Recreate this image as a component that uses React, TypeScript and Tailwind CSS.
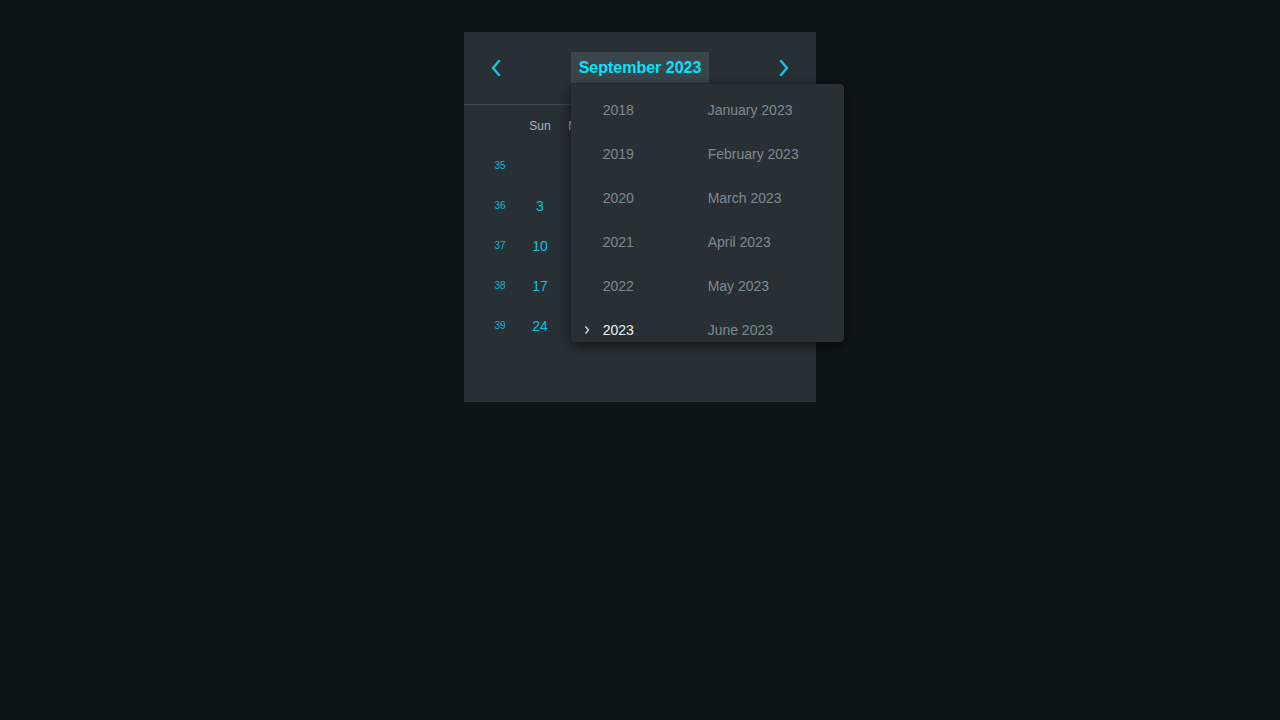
const weeks: { num: number; days: (number | null)[] }[] = [
  { num: 35, days: [null, null, null, null, null, 1, 2] },
  { num: 36, days: [3, 4, 5, 6, 7, 8, 9] },
  { num: 37, days: [10, 11, 12, 13, 14, 15, 16] },
  { num: 38, days: [17, 18, 19, 20, 21, 22, 23] },
  { num: 39, days: [24, 25, 26, 27, 28, 29, 30] },
];

const dayNames = ['Sun', 'Mon', 'Tue', 'Wed', 'Thu', 'Fri', 'Sat'];

const years = [2018, 2019, 2020, 2021, 2022, 2023];
const months = ['January', 'February', 'March', 'April', 'May', 'June'];

function Chevron({ dir }: { dir: 'left' | 'right' }) {
  return (
    <svg width="12" height="18" viewBox="0 0 12 18" fill="none" stroke="currentColor" strokeWidth="2.2" strokeLinecap="square">
      {dir === 'left' ? <path d="M9 2 3 9l6 7" /> : <path d="M3 2l6 7-6 7" />}
    </svg>
  );
}

export default function App() {
  return (
    <div className="min-h-screen bg-[#0e1518] font-['Liberation_Sans',Arial,sans-serif]">
      <div className="flex justify-center pt-8">
        <div className="w-[352px] h-[370px] bg-[#283036]">
          {/* Header */}
          <div className="relative h-[73px] pb-px flex items-center justify-between px-[26px] border-b border-[#3c484e]">
            <button className="text-[#1ec8e6] w-3 flex justify-center">
              <Chevron dir="left" />
            </button>
            <div className="relative ml-[52px]">
              <button className="h-[31px] px-2 bg-[#3a464b] text-[#00e5ff] text-base font-bold">
                September 2023
              </button>
              {/* Month/year picker */}
              <div className="absolute left-0 top-[32px] z-10 w-[273px] h-[258px] overflow-hidden rounded bg-[#283036] shadow-[0_4px_14px_rgba(0,0,0,0.6)] pt-1">
                {years.map((y, i) => (
                  <div key={y} className="flex h-11 items-center text-sm">
                    <div className="relative w-[137px] pl-8">
                      {y === 2023 && (
                        <svg className="absolute left-[13px] top-1/2 -translate-y-1/2 text-[#d8dcde]" width="6" height="10" viewBox="0 0 6 10" fill="none" stroke="currentColor" strokeWidth="1.3">
                          <path d="M1.5 1.5 4.5 5l-3 3.5" />
                        </svg>
                      )}
                      <span className={y === 2023 ? 'text-[#eef0f1]' : 'text-[#7d898f]'}>{y}</span>
                    </div>
                    <span className="text-[#7d898f]">{months[i]} 2023</span>
                  </div>
                ))}
              </div>
            </div>
            <button className="text-[#1ec8e6] w-3 flex justify-center ml-[52px]">
              <Chevron dir="right" />
            </button>
          </div>

          {/* Grid */}
          <div className="px-4 pt-[7px]">
            <div className="grid grid-cols-8 h-[28px] items-center text-xs text-[#aab4b8]">
              <div />
              {dayNames.map((d) => (
                <div key={d} className="text-center">{d}</div>
              ))}
            </div>
            <div className="mt-[5px]">
              {weeks.map((w) => (
                <div key={w.num} className="grid grid-cols-8 h-10 items-center">
                  <div className="text-center text-[10px] text-[#12b4d8]">{w.num}</div>
                  {w.days.map((d, i) => (
                    <div key={i} className="text-center text-sm text-[#0ec0e0] pt-[2px]">{d ?? ''}</div>
                  ))}
                </div>
              ))}
            </div>
          </div>
        </div>
      </div>
    </div>
  );
}
